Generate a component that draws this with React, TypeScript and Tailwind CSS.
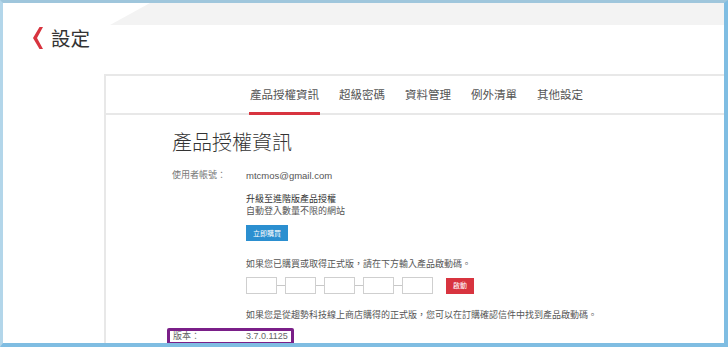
import React from 'react'

const tabs = ['產品授權資訊', '超級密碼', '資料管理', '例外清單', '其他設定']

function CodeInputs() {
  return (
    <div className="flex items-center h-[17px]">
      {[0, 1, 2, 3, 4].map((i) => (
        <div key={i} className="flex items-center">
          {i > 0 && <div className="w-[8px] h-px bg-[#c8c8c8]" />}
          <div className="w-[31px] h-[17px] border border-[#cfcfcf] bg-white" />
        </div>
      ))}
      <button className="ml-[13px] w-[28px] h-[16px] bg-[#d8343f] text-white text-[7px] leading-none">啟動</button>
    </div>
  )
}

export default function App() {
  return (
    <div className="relative w-[728px] h-[347px] overflow-hidden bg-white border-l-[3px] border-t-[3px] border-r-[4px] border-b-[4px] border-l-[#b3d6ea] border-t-[#9fc6dc] border-r-[#7fbde2] border-b-[#7fbde2] font-['Liberation_Sans','Noto_Sans_CJK_TC',sans-serif]">
      {/* grey band at the top */}
      <div className="absolute left-[107px] top-0 w-[620px] h-[22px] bg-[#f3f3f3] [clip-path:polygon(40px_0,100%_0,100%_100%,0_100%)]" />

      <div className="relative flex items-center gap-[8px] pl-[30px] pt-[24px] h-[45px]">
        <svg width="10" height="22" viewBox="0 0 10 22">
          <polygon points="10,0 6.5,0 0,11 6.5,22 10,22 4,11" fill="#d8343f" />
        </svg>
        <span className="text-[19.5px] leading-none text-[#333] font-['Noto_Sans_CJK_TC',sans-serif]">設定</span>
      </div>

      <div className="relative ml-[101px] mt-[26px] border-l-2 border-t-2 border-[#e8e8e8] h-[280px] flex flex-col">
        <div className="h-[39px] border-b-2 border-[#e8e8e8] flex items-stretch pl-[144px] gap-[20px] text-[11.5px] text-[#555]">
          {tabs.map((t, i) => (
            <div key={t} className="relative flex items-center pt-[2px]">
              {t}
              {i === 0 && <div className="absolute -left-[1px] -right-[1px] -bottom-[2px] h-[3px] bg-[#d8343f]" />}
            </div>
          ))}
        </div>

        <div className="pl-[66px] pt-[15px] flex flex-col text-[#555]">
          <h1 className="text-[20px] leading-[24px] text-[#333] font-['Noto_Sans_CJK_TC',sans-serif] font-light">產品授權資訊</h1>

          <div className="flex mt-[16px] items-center h-[12px]">
            <div className="w-[74px] text-[9px] text-[#777]">使用者帳號：</div>
            <div className="text-[9.5px] text-[#555]">mtcmos@gmail.com</div>
          </div>

          <div className="pl-[74px] mt-[11px] flex flex-col">
            <div className="text-[9px] leading-[12px] text-[#333]">升級至進階版產品授權</div>
            <div className="text-[9px] leading-[12px] text-[#555]">自動登入數量不限的網站</div>
            <button className="mt-[8px] w-[42px] h-[16px] bg-[#2b8fd0] text-white text-[7px] leading-none">立即購買</button>

            <div className="mt-[17px] text-[9px] leading-[12px] text-[#555]">如果您已購買或取得正式版，請在下方輸入產品啟動碼。</div>
            <div className="mt-[7px]">
              <CodeInputs />
            </div>
            <div className="mt-[15px] text-[9px] leading-[12px] text-[#555]">如果您是從趨勢科技線上商店購得的正式版，您可以在訂購確認信件中找到產品啟動碼。</div>
          </div>

          <div className="-ml-[5px] mt-[7px] w-[127px] h-[17px] border-[3px] border-[#7a1f88] rounded-[2px] flex items-center pl-[3px] text-[9px] text-[#666]">
            <span className="w-[73px]">版本：</span>
            <span>3.7.0.1125</span>
          </div>
        </div>
      </div>
    </div>
  )
}
